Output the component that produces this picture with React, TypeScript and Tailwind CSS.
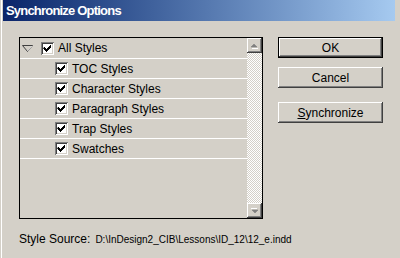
import React from 'react'

const raised =
  'shadow-[inset_-1px_-1px_#404040,inset_1px_1px_#fff,inset_-2px_-2px_#808080,inset_2px_2px_#d4d0c8]'

function Check() {
  return (
    <span className="flex h-[13px] w-[13px] shrink-0 items-center justify-center bg-white shadow-[inset_1px_1px_#808080,inset_-1px_-1px_#fff,inset_2px_2px_#404040,inset_-2px_-2px_#d4d0c8]">
      <svg width="13" height="13" viewBox="0 0 13 13">
        <path d="M3 5h1v1h1v1h1v-1h1v-1h1v-1h1v-1h1v3h-1v1h-1v1h-1v1h-1v1h-1v-1h-1v-1h-1v-1h-1z" fill="#000" />
      </svg>
    </span>
  )
}

function Arrow({ down }: { down?: boolean }) {
  return (
    <svg width="9" height="6" viewBox="0 0 9 6" className={down ? 'rotate-180' : ''}>
      <polygon points="4,1 7,4 1,4" fill="#808080" stroke="#808080" strokeWidth="0.6" />
      <line x1="2" y1="5.5" x2="8" y2="5.5" stroke="#fff" strokeWidth="1" />
    </svg>
  )
}

const items = ['TOC Styles', 'Character Styles', 'Paragraph Styles', 'Trap Styles', 'Swatches']

export default function App() {
  return (
    <div className="relative h-[258px] w-[400px] overflow-hidden bg-[#d4d0c8] pl-[3px] pr-[5px] font-['Liberation_Sans',Arial,sans-serif] text-[12px] text-black shadow-[inset_1px_0_#d4d0c8,inset_2px_0_#fff]">
      <div className="flex h-[21px] items-center bg-gradient-to-r from-[#0a246a] to-[#a6caf0] pl-[3px] pt-[1px] text-[13px] font-bold tracking-[-0.8px] text-white">
        Synchronize Options
      </div>

      <div className="mt-[16px] flex pl-[16px]">
        <div className="flex h-[182px] w-[244px] border border-black">
          <div className="flex-1">
            <div className="flex h-[21px] items-center border-b border-white">
              <svg width="11" height="7" viewBox="0 0 11 7" className="ml-[2px]">
                <polygon points="0.5,0.5 10.5,0.5 5.5,6.5" fill="#d4d0c8" stroke="#404040" strokeWidth="1" />
                <line x1="5.5" y1="6" x2="10" y2="1" stroke="#fff" strokeWidth="0.8" />
              </svg>
              <span className="ml-[8px]">
                <Check />
              </span>
              <span className="ml-[4px]">All Styles</span>
            </div>
            {items.map((t) => (
              <div key={t} className="flex h-[20px] items-center border-b border-white pl-[35px]">
                <Check />
                <span className="ml-[4px]">{t}</span>
              </div>
            ))}
          </div>
          <div className="flex w-[15px] flex-col">
            <div className={`flex h-[15px] items-center justify-center bg-[#d4d0c8] ${raised}`}>
              <Arrow />
            </div>
            <div className="flex-1 bg-[repeating-conic-gradient(#fff_0%_25%,#d4d0c8_0%_50%)] bg-[length:2px_2px]" />
            <div className={`flex h-[15px] items-center justify-center bg-[#d4d0c8] ${raised}`}>
              <Arrow down />
            </div>
          </div>
        </div>

        <div className="ml-[15px] flex w-[105px] flex-col">
          <button className="h-[21px] border border-black bg-[#d4d0c8] p-0">
            <div className={`flex h-full items-center justify-center ${raised}`}>OK</div>
          </button>
          <button className={`mt-[9px] flex h-[21px] items-center justify-center bg-[#d4d0c8] ${raised}`}>
            Cancel
          </button>
          <button className={`mt-[14px] flex h-[21px] items-center justify-center bg-[#d4d0c8] ${raised}`}>
            <span className="underline">S</span>ynchronize
          </button>
        </div>
      </div>

      <div className="mt-[11px] flex items-baseline pl-[16px]">
        <span className="text-[12px]">Style Source:</span>
        <span className="ml-[5px] text-[10px]">D:\InDesign2_CIB\Lessons\ID_12\12_e.indd</span>
      </div>
    </div>
  )
}
